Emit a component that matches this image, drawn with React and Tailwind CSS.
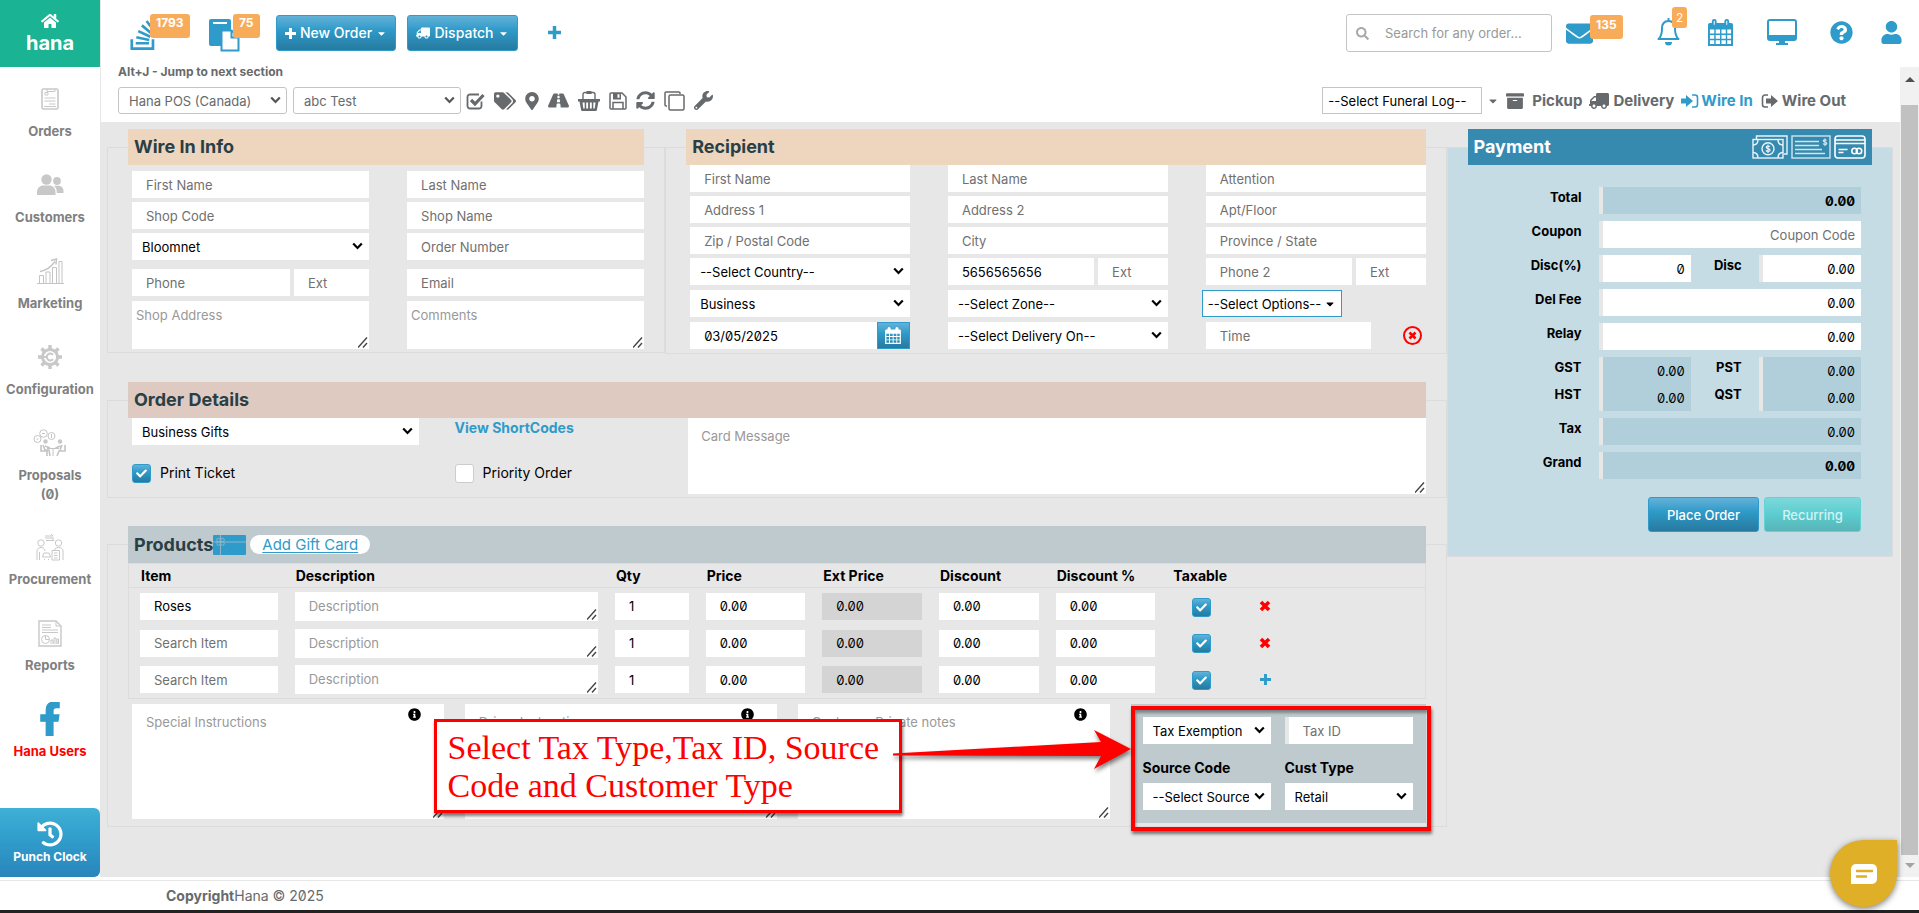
import React from 'react';
import {
  FaHome, FaTruck, FaCaretDown, FaSearch, FaEnvelope, FaUser, FaTags, FaMapMarkerAlt,
  FaRoad, FaSyncAlt, FaWrench, FaArchive, FaHistory, FaFacebookF, FaInfoCircle, FaCheck,
  FaStackOverflow, FaQuestionCircle,
} from 'react-icons/fa';

const BLUE_BTN =
  'bg-linear-to-b from-[#62b2d8] via-[#2f9bca] via-40% to-[#277a9f] border border-[#2f9bca] text-white';

/* ---------- icons ---------- */

function PlusIcon({ className }) {
  return (
    <svg viewBox="0 0 12 12" className={className}>
      <path d="M6 0v12M0 6h12" stroke="currentColor" strokeWidth="3.200" />
    </svg>
  );
}

function CrossIcon({ className }) {
  return (
    <svg viewBox="0 0 12 12" className={className}>
      <path d="M2 2l8 8M10 2l-8 8" stroke="currentColor" strokeWidth="3.600" />
    </svg>
  );
}

function ClipboardIcon() {
  return (
    <svg width="32" height="34" viewBox="0 0 32 34" fill="none">
      <path d="M1 3a2 2 0 0 1 2-2h18a2 2 0 0 1 2 2v9h-6a3 3 0 0 0-3 3v13H3a2 2 0 0 1-2-2z" fill="#2f9bca" />
      <rect x="5" y="4" width="14" height="2" fill="#fff" />
      <path d="M13.500 12.500h10l7 7v13h-17z" fill="#fff" stroke="#2f9bca" strokeWidth="2" />
      <path d="M23.500 12.500v7h7" stroke="#2f9bca" strokeWidth="2" />
    </svg>
  );
}

function CalendarIcon({ width, height }) {
  return (
    <svg width={width} height={height} viewBox="0 0 26 28" fill="none">
      <path fillRule="evenodd" fill="currentColor" d="M0 6a2 2 0 0 1 2-2h22a2 2 0 0 1 2 2v22H0zM2 11v4h4.500v-4zM8 11v4h4.500v-4zM14 11v4h4.500v-4zM20 11v4h4v-4zM2 16.500v4h4.500v-4zM8 16.500v4h4.500v-4zM14 16.500v4h4.500v-4zM20 16.500v4h4v-4zM2 22v4h4.500v-4zM8 22v4h4.500v-4zM14 22v4h4.500v-4zM20 22v4h4v-4z" />
      <rect x="4" y="0" width="5" height="8" rx="2.500" fill="currentColor" />
      <rect x="17" y="0" width="5" height="8" rx="2.500" fill="currentColor" />
      <path d="M6.500 2v4M19.500 2v4" stroke="#fff" strokeWidth="1" />
    </svg>
  );
}

function BellIcon() {
  return (
    <svg width="23" height="28" viewBox="0 0 23 28" fill="none" stroke="#2f9bca" strokeWidth="2">
      <path d="M11.500 3C6.800 3 5 6.500 5 10.500c0 6-1.200 8.500-3.500 10.500h20C19.200 19 18 16.500 18 10.500 18 6.500 16.200 3 11.500 3z" strokeLinejoin="round" />
      <path d="M11.500 0v3" />
      <path d="M8 24h7a3.500 3.500 0 0 1-7 0z" fill="#2f9bca" stroke="none" />
    </svg>
  );
}

function MonitorIcon() {
  return (
    <svg width="30" height="26" viewBox="0 0 30 26" fill="none">
      <rect x="1" y="1" width="28" height="20" rx="2" stroke="#2f9bca" strokeWidth="2" />
      <path d="M1 16h28v3a2 2 0 0 1-2 2H3a2 2 0 0 1-2-2zM12 21h6v3h3v2H9v-2h3z" fill="#2f9bca" />
    </svg>
  );
}

function CheckSquareIcon() {
  return (
    <svg width="19" height="18" viewBox="0 0 19 18" fill="none" stroke="currentColor">
      <path d="M15.500 9.500V14a2.500 2.500 0 0 1-2.500 2.500H4A2.500 2.500 0 0 1 1.500 14V5A2.500 2.500 0 0 1 4 2.500h9" strokeWidth="1.800" />
      <path d="M5 8l4 4L17.500 3" strokeWidth="3.200" />
    </svg>
  );
}

function BasketIcon() {
  return (
    <svg width="22" height="20" viewBox="0 0 22 20" fill="none">
      <path d="M5 9V3.500A2 2 0 0 1 7 1.500h8a2 2 0 0 1 2 2V9" stroke="currentColor" strokeWidth="1.400" />
      <rect x="8" y="0" width="6" height="3" rx="1.500" fill="currentColor" />
      <path fillRule="evenodd" fill="currentColor" d="M0 8h22v2.500h-1.500L19 18.500a1.500 1.500 0 0 1-1.500 1.500h-13A1.500 1.500 0 0 1 3 18.500L1.500 10.500H0zM4.500 11.500l.8 6h1.400v-6zM8.200 11.500v6h1.900v-6zM11.900 11.500v6h1.900v-6zM15.300 11.500v6h1.400l.8-6z" />
    </svg>
  );
}

function SaveIcon() {
  return (
    <svg width="18" height="18" viewBox="0 0 18 18" fill="none" stroke="currentColor" strokeWidth="1.500">
      <path d="M1 2a1 1 0 0 1 1-1h11l4 4v11a1 1 0 0 1-1 1H2a1 1 0 0 1-1-1z" />
      <path d="M4 17v-6.500h10V17" />
      <path fillRule="evenodd" d="M4 1h8v6.500H4zM8.500 2.200v3.600h2V2.200z" fill="currentColor" stroke="none" />
    </svg>
  );
}

function CopyIcon() {
  return (
    <svg width="21" height="20" viewBox="0 0 21 20" fill="none" stroke="currentColor" strokeWidth="1.500">
      <path d="M3 15H2a1 1 0 0 1-1-1V2a1 1 0 0 1 1-1h13a1 1 0 0 1 1 1v1" />
      <rect x="5" y="4" width="15" height="15" rx="1.500" />
    </svg>
  );
}

function SignIcon({ out }) {
  return (
    <svg width="18" height="16" viewBox="0 0 18 16" fill="none">
      <path
        d={out ? 'M7 2H4a2.500 2.500 0 0 0-2.500 2.500v7A2.500 2.500 0 0 0 4 14h3' : 'M11 2h3a2.500 2.500 0 0 1 2.500 2.500v7A2.500 2.500 0 0 1 14 14h-3'}
        stroke="currentColor"
        strokeWidth="1.600"
      />
      <path d={out ? 'M5 5.500h5V2l7 6-7 6v-3.500H5z' : 'M0 5.500h5V2l7 6-7 6v-3.500H0z'} fill="currentColor" />
    </svg>
  );
}

function GiftCardIcon() {
  return (
    <svg width="33" height="20" viewBox="0 0 33 20" fill="none" stroke="#8fb4c6">
      <rect x="0" y="0" width="33" height="20" rx="1" fill="#2f9bca" stroke="none" />
      <path d="M0 7h33M7.500 0v20" />
      <circle cx="5.500" cy="5" r="1.800" />
      <circle cx="9.500" cy="5" r="1.800" />
      <circle cx="5.500" cy="8.500" r="1.800" />
      <circle cx="9.500" cy="8.500" r="1.800" />
    </svg>
  );
}

function CashIcon() {
  return (
    <svg width="36" height="24" viewBox="0 0 36 24" fill="none" stroke="#e8f4f9" strokeWidth="1.400">
      <path d="M4.500 4V1H35v18h-3" />
      <rect x="1" y="4.500" width="30" height="18.500" />
      <circle cx="16" cy="13.700" r="6" />
      <path d="M1 10c3 0 5-2 5-5.500M31 10c-3 0-5-2-5-5.500M1 17.500c3 0 5 2 5 5.500M31 17.500c-3 0-5 2-5 5.500" />
      <path d="M18 11.800c-.5-1-3.800-1.200-3.800.4 0 1.900 3.900 1 3.900 3 0 1.700-3.500 1.500-4.200.2M16 9.500v8.500" strokeWidth="1.200" />
    </svg>
  );
}

function ChequeIcon() {
  return (
    <svg width="40" height="24" viewBox="0 0 40 24" fill="none" stroke="#cfe6f0" strokeWidth="1.400">
      <rect x="1" y="1" width="38" height="22" />
      <path d="M4 6.500h24M4 10.500h24M4 14.500h27M4 18.500h30" />
      <path d="M35.500 5.500c-.5-1-3.300-1-3.300.3 0 1.600 3.500.8 3.500 2.600 0 1.500-3 1.400-3.600.2M34 3.500v7.500" strokeWidth="1.200" />
    </svg>
  );
}

function CreditCardIcon() {
  return (
    <svg width="32" height="24" viewBox="0 0 32 24" fill="none" stroke="#fff" strokeWidth="1.600">
      <rect x="1" y="1" width="30" height="22" rx="3" />
      <path d="M1 5h30M1 8.500h30" />
      <path d="M4.500 14.500h9M4.500 17.500h5" />
      <circle cx="20.500" cy="16" r="2.700" />
      <circle cx="25" cy="16" r="2.700" />
    </svg>
  );
}

function OrdersIcon() {
  return (
    <svg width="18" height="22" viewBox="0 0 18 22" fill="none" stroke="#c8c8c8">
      <rect x="1" y="1" width="16" height="20" rx="1.500" strokeWidth="1.600" />
      <path d="M6 1v2.500h8V1M4 4.500h3v2.500H4zM3.500 10h11M3.500 13h11M8 16h6.500M3 18.500h12" />
    </svg>
  );
}

function CustomersIcon() {
  return (
    <svg width="27" height="22" viewBox="0 0 27 22" fill="#c8c8c8">
      <circle cx="9.500" cy="5.500" r="5.200" />
      <path d="M0 21v-3c0-4 3-6.500 6.500-6.500h5.500c3.500 0 6.500 2.500 6.500 6.500v3z" />
      <circle cx="20" cy="7" r="3.900" />
      <path d="M19.800 19v-1c0-2.700-1.200-5-3-6.300h4.700c3 0 5 2.200 5 5.300v2z" />
    </svg>
  );
}

function MarketingIcon() {
  return (
    <svg width="27" height="26" viewBox="0 0 27 26" fill="none" stroke="#c4c4c4">
      <path d="M0 25.500h27" />
      <path d="M2.500 25v-7.500h4V25M9 25V14h4v11M15.500 25V9.500h4V25M22 25V3.500h3V25" />
      <path d="M3 13.500c6-1 11-4.500 15-10M14 2.500l5.500-1.500-.5 5.500" strokeWidth="1.400" />
    </svg>
  );
}

function ConfigIcon() {
  return (
    <svg width="26" height="26" viewBox="0 0 26 26" fill="none" stroke="#c8c8c8">
      <circle cx="13" cy="13" r="7.600" strokeWidth="3" />
      <path d="M13 1v4M13 21v4M1 13h4M21 13h4M4.500 4.500l2.800 2.800M18.700 18.700l2.800 2.800M4.500 21.500l2.800-2.800M18.700 7.300l2.800-2.800" strokeWidth="3.400" />
      <path d="M1 13h9M16 10.800a3.500 3.500 0 1 0 0 4.400" strokeWidth="2" />
    </svg>
  );
}

function ProposalsIcon() {
  return (
    <svg width="34" height="28" viewBox="0 0 34 28" fill="none" stroke="#c4c4c4">
      <circle cx="4.500" cy="10" r="3.500" />
      <circle cx="10.500" cy="4.500" r="3.800" />
      <circle cx="18.500" cy="7" r="3.500" />
      <path d="M3.500 10h2M9 4.500h3M18.500 5v4" />
      <circle cx="12.500" cy="12.500" r="2.200" fill="#c8c8c8" stroke="none" />
      <circle cx="27" cy="12.500" r="2.200" fill="#c8c8c8" stroke="none" />
      <path d="M12 17l5 2M8 16v6h6v5M10 16l2 5h4l1 6M27.500 17l-5 2M32 16v6h-6l-2 5M29 16l-2 5" strokeWidth="1.600" />
      <path d="M14 19.500h12M20 19.500V27" />
    </svg>
  );
}

function ProcurementIcon() {
  return (
    <svg width="28" height="28" viewBox="0 0 28 28" fill="none" stroke="#c8c8c8">
      <path d="M9 3h8l-2-2M9 5h9M10 7.500h8l-2-2" />
      <circle cx="5" cy="10" r="3.200" />
      <circle cx="22.500" cy="10" r="3.200" />
      <path d="M1 27V18c0-2 1.500-3.500 4-3.500s4 1.500 4 3.500M3.500 19v8M27 27v-9c0-2-1.500-3.500-4.500-3.500-2 0-3.500 1-4 2.500" />
      <path d="M6.500 24h8l-1.500-4H8zM8 26.500h1M12 26.500h1M16 17.500h7.500V27H16zM18 20h3.500M18 22.500h3.500M18 25h3.500" />
    </svg>
  );
}

function ReportsIcon() {
  return (
    <svg width="24" height="27" viewBox="0 0 24 27" fill="none" stroke="#c8c8c8">
      <path d="M1 1h17l5 5v20H1z" strokeWidth="1.400" />
      <path d="M18 1v5h5M4 5h9M4 7.500h9M4 10h16M4 12.500h16" />
      <circle cx="7.500" cy="19.500" r="4" />
      <path d="M7.500 15.500v4h4M13 24v-4h2v4M16 24v-6h2v6M19 24v-5h1.500v5" />
    </svg>
  );
}

/* heavy, square-cut f */
function FacebookIcon() {
  return <FaFacebookF className="size-[34px] stroke-current stroke-[20px] text-[#2f9bca]" />;
}

/* ---------- form parts ---------- */

function TextField({ label, value, className = '' }) {
  return (
    <input
      type="text"
      aria-label={label}
      placeholder={label}
      defaultValue={value}
      className={`h-[27px] w-full min-w-0 bg-white px-[14px] text-black placeholder:text-[#707070] ${className}`}
    />
  );
}

function SelectField({ id, label, value, className = 'text-black' }) {
  return (
    <div className="relative min-w-0">
      <select
        id={id}
        aria-label={label}
        className={`h-[27px] w-full appearance-none bg-white pr-[22px] pl-[10px] ${className}`}
      >
        <option>{value}</option>
      </select>
      <svg width="11" height="8" viewBox="0 0 11 8" fill="none" className={`pointer-events-none absolute top-[9px] right-[6px] ${className === 'text-black' ? '' : 'text-[#555]'}`}>
        <path d="M1.200 1.500L5.500 6l4.300-4.500" stroke="currentColor" strokeWidth="2.200" />
      </svg>
    </div>
  );
}

function TextArea({ label, className = '' }) {
  return (
    <div className="relative w-full min-w-0">
      <textarea
        aria-label={label}
        placeholder={label}
        className={`block w-full resize-none bg-white text-black placeholder:text-[#999] ${className}`}
      />
      <svg width="10" height="11" viewBox="0 0 10 11" className="pointer-events-none absolute right-px bottom-px">
        <path d="M0 10.500L9 .5M5 10.500l4-4.500" stroke="#444" strokeWidth="1.400" />
      </svg>
    </div>
  );
}

function Checkbox({ checked, id, label }) {
  return (
    <span className="relative inline-flex align-middle">
      <input
        type="checkbox"
        id={id}
        aria-label={label}
        defaultChecked={checked}
        className="size-[19px] appearance-none rounded-[3px] border border-[#ccc] bg-white checked:border-[#2f9bca] checked:bg-linear-to-b checked:from-[#62b2d8] checked:via-[#2f9bca] checked:via-40% checked:to-[#277a9f]"
      />
      {checked && <FaCheck className="pointer-events-none absolute top-1 left-1 size-[11px] text-white" />}
    </span>
  );
}

function Panel({ title, color, extra, titleColor = 'text-[#2a3f45]', bar = 'h-9', className = '', children }) {
  return (
    <fieldset className={`min-w-0 border border-[#dcdcdc] px-5 ${className}`}>
      <legend className={`w-full ${color}`}>
        <span className={`flex items-center px-[6px] ${bar}`}>
          <span className={`text-[18px] leading-6 font-bold ${titleColor}`}>{title}</span>
          {extra}
        </span>
      </legend>
      {children}
    </fieldset>
  );
}

/* ---------- layout ---------- */

const MENU = [
  { label: 'Orders', icon: <OrdersIcon /> },
  { label: 'Customers', icon: <CustomersIcon /> },
  { label: 'Marketing', icon: <MarketingIcon /> },
  { label: 'Configuration', icon: <ConfigIcon /> },
  { label: 'Proposals', count: '(0)', icon: <ProposalsIcon /> },
  { label: 'Procurement', icon: <ProcurementIcon /> },
  { label: 'Reports', icon: <ReportsIcon /> },
  { label: 'Hana Users', red: true, icon: <FacebookIcon /> },
];

function Sidebar() {
  return (
    <aside className="flex w-[101px] shrink-0 flex-col border-r border-[#e7e7e7] bg-white">
      <a href="#home" className="flex h-[67px] flex-col items-center bg-[#1ab394] pt-3 text-white">
        <FaHome className="size-[18px]" />
        <span className="text-[20px] leading-[26px] font-bold">hana</span>
      </a>
      <nav>
        {MENU.map((item) => (
          <a
            key={item.label}
            href="#menu"
            className={`flex flex-col items-center pt-[18px] pb-3 text-[13px] leading-5 font-bold ${item.red ? 'text-[#f00]' : 'text-[#808080]'}`}
          >
            <span className="mb-2 flex h-7 items-center">{item.icon}</span>
            {item.label}
            {item.count && <span className="leading-[18px] slashed-zero">{item.count}</span>}
          </a>
        ))}
      </nav>
      <button
        type="button"
        className="mt-auto flex h-[69px] w-full flex-col items-center justify-center gap-[2px] rounded-r-md bg-linear-to-b from-[#3fb0d6] via-[#2f9bca] to-[#2a85bb] text-xs font-bold text-white"
      >
        <FaHistory className="size-[26px]" />
        Punch Clock
      </button>
    </aside>
  );
}

function Badge({ children, className }) {
  return (
    <span className={`absolute rounded-[3px] bg-[#f8ac59] px-[6px] text-xs font-bold text-white ${className}`}>
      {children}
    </span>
  );
}

function Header() {
  return (
    <header className="flex h-[67px] items-start justify-between bg-white pt-[14px] pr-[17px] pl-7">
      <div className="flex items-start">
        <a href="#queue" aria-label="Order queue" className="relative mr-[51px] pt-[4px]">
          <FaStackOverflow className="h-[34px] w-[28px] text-[#2f9bca]" />
          <Badge className="top-0 left-[21px] h-6 leading-[18px]">1793</Badge>
        </a>
        <a href="#drafts" aria-label="Saved orders" className="relative mr-9 pt-[4px]">
          <ClipboardIcon />
          <Badge className="top-0 left-[25px] h-6 leading-[18px]">75</Badge>
        </a>
        <button type="button" className={`mt-px mr-[11px] flex h-9 w-[120px] items-center justify-center gap-1 rounded-[3px] text-sm font-medium ${BLUE_BTN}`}>
          <PlusIcon className="size-[11px]" />
          New Order
          <FaCaretDown className="size-[11px]" />
        </button>
        <button type="button" className={`mt-px mr-[30px] flex h-9 w-[111px] items-center justify-center gap-1 rounded-[3px] text-sm font-medium ${BLUE_BTN}`}>
          <FaTruck className="size-[14px] -scale-x-100" />
          Dispatch
          <FaCaretDown className="size-[11px]" />
        </button>
        <button type="button" aria-label="Add" className="mt-3 text-[#2f9bca]">
          <PlusIcon className="size-[13px]" />
        </button>
      </div>

      <div className="flex items-start text-[#2f9bca]">
        <label className="mr-[14px] flex h-[38px] w-[206px] items-center gap-4 rounded-[3px] border border-[#c4c4c4] px-[9px]">
          <FaSearch className="size-[13px] shrink-0 text-[#aaa]" />
          <input type="search" aria-label="Search for any order" placeholder="Search for any order..." className="min-w-0 flex-1 text-[13px] placeholder:text-[#999]" />
        </label>
        <a href="#mail" aria-label="Messages" className="relative mr-16 pt-[6px]">
          <FaEnvelope className="size-[27px]" />
          <Badge className="top-px left-6 h-6 leading-5">135</Badge>
        </a>
        <div className="flex items-center gap-7 pt-1">
          <a href="#alerts" aria-label="Alerts" className="relative">
            <BellIcon />
            <span className="absolute -top-[11px] left-[15px] rounded-[3px] bg-[#f8ac59] px-1 text-[12px] leading-[21px] text-white">2</span>
          </a>
          <a href="#calendar" aria-label="Calendar"><CalendarIcon width="25" height="27" /></a>
          <a href="#screens" aria-label="Screens" className="flex w-[41px] justify-center"><MonitorIcon /></a>
          <a href="#help" aria-label="Help"><FaQuestionCircle className="size-[23px]" /></a>
          <a href="#profile" aria-label="Profile"><FaUser className="h-[23px] w-[21px]" /></a>
        </div>
      </div>
    </header>
  );
}

function Toolbar() {
  return (
    <div className="bg-white pb-2 pl-[17px] text-[#676a6c]">
      <p className="h-5 text-[12px] leading-[10px] font-bold">Alt+J - Jump to next section</p>
      <div className="flex items-center justify-between pr-[54px]">
        <div className="flex items-center">
          <div className="mr-[6px] w-[169px]">
            <SelectField label="Shop" value="Hana POS (Canada)" className="rounded-[3px] border border-[#c4c4c4] text-[#676a6c]" />
          </div>
          <div className="mr-[5px] w-[168px]">
            <SelectField label="Customer" value="abc Test" className="rounded-[3px] border border-[#c4c4c4] text-[#676a6c]" />
          </div>
          <div className="flex items-center gap-[9px]">
            <CheckSquareIcon />
            <FaTags className="size-[22px]" />
            <FaMapMarkerAlt className="h-[18px] w-[14px]" />
            <FaRoad className="size-[21px]" />
            <BasketIcon />
            <SaveIcon />
            <FaSyncAlt className="size-[19px]" />
            <CopyIcon />
            <FaWrench className="size-[19px]" />
          </div>
        </div>

        <div className="flex items-center text-[15px] font-bold">
          <button type="button" className="h-[27px] w-[160px] border border-[#c4c4c4] bg-white px-[5px] text-left text-[13px] font-normal text-black">
            --Select Funeral Log--
          </button>
          <FaCaretDown className="mx-[5px] size-3" />
          <FaArchive className="mr-2 ml-[2px] size-[18px]" />
          <a href="#pickup" className="mr-[7px]">Pickup</a>
          <FaTruck className="mr-1 size-5 -scale-x-100" />
          <a href="#delivery" className="mr-[7px]">Delivery</a>
          <a href="#wirein" className="mr-2 flex items-center gap-[2px] text-[#2f9bca]"><SignIcon />Wire In</a>
          <a href="#wireout" className="flex items-center gap-[3px]"><SignIcon out />Wire Out</a>
        </div>
      </div>
    </div>
  );
}

function WireInInfo() {
  return (
    <Panel title="Wire In Info" color="bg-[#eed5be]" className="col-span-5 pb-[3px]">
      <div className="grid grid-cols-2 gap-x-[38px] gap-y-1 pt-[6px] pl-1">
        <TextField label="First Name" />
        <TextField label="Last Name" />
        <TextField label="Shop Code" />
        <TextField label="Shop Name" />
        <SelectField label="Wire service" value="Bloomnet" />
        <TextField label="Order Number" />
      </div>
      <div className="mt-[9px] grid grid-cols-2 gap-x-[38px] gap-y-[5px] pl-1">
        <div className="grid grid-cols-[21fr_10fr] gap-1">
          <TextField label="Phone" />
          <TextField label="Ext" />
        </div>
        <TextField label="Email" />
        <TextArea label="Shop Address" className="h-12 px-1 py-1" />
        <TextArea label="Comments" className="h-12 px-1 py-1" />
      </div>
    </Panel>
  );
}

function Recipient() {
  return (
    <Panel title="Recipient" color="bg-[#eed5be]" className="col-span-7 pb-1">
      <div className="grid grid-cols-3 gap-x-[38px] gap-y-1 pl-1">
        <TextField label="First Name" />
        <TextField label="Last Name" />
        <TextField label="Attention" />
        <TextField label="Address 1" />
        <TextField label="Address 2" />
        <TextField label="Apt/Floor" />
        <TextField label="Zip / Postal Code" />
        <TextField label="City" />
        <TextField label="Province / State" />
      </div>
      <div className="mt-1 grid grid-cols-3 gap-x-[38px] gap-y-[5px] pl-1">
        <SelectField label="Country" value="--Select Country--" />
        <div className="grid grid-cols-[21fr_10fr] gap-1">
          <TextField label="Phone" value="5656565656" />
          <TextField label="Ext" />
        </div>
        <div className="grid grid-cols-[21fr_10fr] gap-1">
          <TextField label="Phone 2" />
          <TextField label="Ext" />
        </div>
        <SelectField label="Location type" value="Business" />
        <SelectField label="Zone" value="--Select Zone--" />
        <button type="button" className="-ml-1 flex h-[27px] w-[140px] items-center justify-between border border-[#2f9bca] bg-white px-[5px] text-black">
          --Select Options--
          <FaCaretDown className="size-3" />
        </button>
        <div className="flex">
          <TextField label="Delivery date" value="03/05/2025" className="flex-1 slashed-zero" />
          <button type="button" aria-label="Pick a date" className={`flex h-[27px] w-[33px] shrink-0 items-center justify-center ${BLUE_BTN}`}>
            <CalendarIcon width="16" height="17" />
          </button>
        </div>
        <SelectField label="Deliver on" value="--Select Delivery On--" />
        <div className="flex items-center justify-between">
          <div className="w-3/4">
            <TextField label="Time" />
          </div>
          <button type="button" aria-label="Remove recipient" className="mr-1 flex size-[19px] items-center justify-center rounded-full border-2 border-[#f00] text-[#f00]">
            <CrossIcon className="size-[9px]" />
          </button>
        </div>
      </div>
    </Panel>
  );
}

function OrderDetails() {
  return (
    <Panel title="Order Details" color="bg-[#dfcac2]" className="col-span-12 mt-7 pb-[3px]">
      <div className="flex pl-1">
        <div className="grid w-[43%] shrink-0 grid-cols-[58%_42%] content-start gap-y-[18px] text-[14px] text-black">
          <div className="pr-9 text-[13px]">
            <SelectField label="Occasion" value="Business Gifts" />
          </div>
          <a href="#shortcodes" className="leading-5 font-bold text-[#2f9bca]">View ShortCodes</a>
          <label htmlFor="print-ticket" className="flex items-center gap-[9px]">
            <Checkbox id="print-ticket" checked />
            Print Ticket
          </label>
          <label htmlFor="priority-order" className="flex items-center gap-[9px]">
            <Checkbox id="priority-order" />
            Priority Order
          </label>
        </div>
        <TextArea label="Card Message" className="h-[76px] px-[13px] py-2" />
      </div>
    </Panel>
  );
}

const ITEMS = [
  { item: 'Roses', last: false },
  { item: '', last: false },
  { item: '', last: true },
];

function ProductTable() {
  return (
    <table className="w-full table-fixed border border-[#dcdcdc] text-left text-black">
      <colgroup>
        <col className="w-[12.2%]" />
        <col className="w-[24.7%]" />
        <col className="w-[7%]" />
        <col className="w-[9%]" />
        <col className="w-[9%]" />
        <col className="w-[9%]" />
        <col className="w-[9%]" />
        <col className="w-[5.7%]" />
        <col className="w-[4.2%]" />
        <col />
      </colgroup>
      <thead className="text-[14px]">
        <tr className="h-6 border-b border-[#dcdcdc]">
          <th className="pl-3">Item</th>
          <th className="pl-[9px]">Description</th>
          <th className="pl-[9px]">Qty</th>
          <th className="pl-[9px]">Price</th>
          <th className="pl-[9px]">Ext Price</th>
          <th className="pl-[9px]">Discount</th>
          <th className="pl-[9px]">Discount %</th>
          <th className="pl-[9px]">Taxable</th>
          <th />
          <th />
        </tr>
      </thead>
      <tbody>
        {ITEMS.map((row, i) => (
          <tr key={i} className="h-[37px]">
            <td className="pr-[9px] pl-[11px]"><TextField label="Search Item" value={row.item} /></td>
            <td className="pr-[9px] pl-2"><TextArea label="Description" className="h-[29px] px-[14px] py-1" /></td>
            <td className="pr-[9px] pl-2"><TextField label="Qty" value="1" /></td>
            <td className="pr-[9px] pl-2"><TextField label="Price" value="0.00" className="slashed-zero" /></td>
            <td className="pr-[9px] pl-2">
              <input type="text" aria-label="Ext Price" readOnly value="0.00" className="h-[27px] w-full bg-[#d4d4d4] px-[14px] slashed-zero" />
            </td>
            <td className="pr-[9px] pl-2"><TextField label="Discount" value="0.00" className="slashed-zero" /></td>
            <td className="pr-[9px] pl-2"><TextField label="Discount %" value="0.00" className="slashed-zero" /></td>
            <td className="text-center align-middle"><Checkbox label="Taxable" checked /></td>
            <td>
              {row.last ? (
                <button type="button" aria-label="Add item" className="mx-auto block text-[#2f9bca]"><PlusIcon className="size-[11px]" /></button>
              ) : (
                <button type="button" aria-label="Remove item" className="mx-auto block text-[#f00]"><CrossIcon className="size-3" /></button>
              )}
            </td>
            <td />
          </tr>
        ))}
      </tbody>
    </table>
  );
}

function Note({ label }) {
  return (
    <div className="relative">
      <TextArea label={label} className="h-[115px] px-[14px] py-2" />
      <FaInfoCircle className="absolute top-1 right-[23px] size-[13px] text-black" />
    </div>
  );
}

/* red tutorial callout with its arrow, hung on the left of the tax box */
function Callout() {
  return (
    <>
      <div className="pointer-events-none absolute top-[2px] -right-[5px] -bottom-2 left-0 border-4 border-[#f00] shadow-[1px_3px_3px_rgba(0,0,0,0.5),inset_1px_3px_3px_rgba(0,0,0,0.35)]" />
      <div className="pointer-events-none absolute top-[15px] right-full flex">
        <p className="h-[94px] w-[468px] border-[3px] border-[#f00] bg-white pt-[7px] pl-[11px] font-['Liberation_Serif',serif] text-[34px] leading-[38px] whitespace-nowrap text-[#f00] shadow-[1px_3px_3px_rgba(0,0,0,0.5)]">
          Select Tax Type,Tax ID, Source
          <br />
          Code and Customer Type
        </p>
        <svg width="238" height="60" viewBox="0 0 238 60" className="-ml-[9px] drop-shadow-[1px_3px_2px_rgba(0,0,0,0.5)]">
          <path d="M0 34.500L208 23l-7-12 37 19-37 20 7-13L0 36.500z" fill="#f00" />
        </svg>
      </div>
    </>
  );
}

function TaxBox() {
  return (
    <div className="relative grid h-[119px] grid-cols-2 content-start gap-x-[14px] bg-[#bfcace] pt-[13px] pr-[13px] pl-3 text-black">
      <SelectField label="Tax type" value="Tax Exemption" />
      <TextField label="Tax ID" className="border-l-4 border-[#e7e7e7]" />
      <label htmlFor="source-code" className="pt-[14px] pb-[5px] text-[14px] leading-5 font-bold">Source Code</label>
      <label htmlFor="cust-type" className="pt-[14px] pb-[5px] text-[14px] leading-5 font-bold">Cust Type</label>
      <SelectField id="source-code" value="--Select Source Code--" />
      <SelectField id="cust-type" value="Retail" />
      <Callout />
    </div>
  );
}

function Products() {
  return (
    <Panel
      title="Products"
      color="bg-[#bfcace]"
      bar="h-[37px]"
      className="col-span-12 mt-7 pb-[3px]"
      extra={
        <>
          <GiftCardIcon />
          <a href="#giftcard" className="ml-1 rounded-full bg-white px-3 text-[15px] leading-[19px] text-[#2f9bca] underline underline-offset-2">
            Add Gift Card
          </a>
        </>
      }
    >
      <ProductTable />
      <div className="mt-[5px] grid grid-cols-[1fr_1fr_1fr_295px] gap-[21px] pl-1">
        <Note label="Special Instructions" />
        <Note label="Driver Instructions" />
        <Note label="Customer Private notes" />
        <TaxBox />
      </div>
    </Panel>
  );
}

function PayField({ id, label, value, placeholder, locked, bold, className = '' }) {
  return (
    <>
      <label htmlFor={id} className="pr-[17px] text-right leading-[21px] font-bold text-black">{label}</label>
      <input
        id={id}
        type="text"
        defaultValue={value}
        placeholder={placeholder}
        className={`h-[27px] w-full min-w-0 border-l-4 border-[#e7e7e7] pr-[6px] text-right text-black slashed-zero placeholder:text-[#707070] ${locked ? 'bg-[#b0cfda]' : 'bg-white'} ${bold ? 'font-bold' : ''} ${className}`}
      />
    </>
  );
}

function Payment() {
  return (
    <Panel
      title="Payment"
      color="bg-[#378aaf]"
      titleColor="text-white"
      className="bg-[#c6dce4] pb-6"
      extra={
        <span className="ml-auto flex items-center gap-[3px]">
          <CashIcon />
          <ChequeIcon />
          <CreditCardIcon />
        </span>
      }
    >
      <div className="grid grid-cols-[131px_92fr_68px_102fr] gap-y-[7px] pt-[22px] pr-[11px]">
        <PayField id="total" label="Total" value="0.00" locked bold className="col-span-3" />
        <PayField id="coupon" label="Coupon" placeholder="Coupon Code" className="col-span-3" />
        <PayField id="disc-pct" label="Disc(%)" value="0" />
        <PayField id="disc" label="Disc" value="0.00" />
        <PayField id="del-fee" label="Del Fee" value="0.00" className="col-span-3" />
        <PayField id="relay" label="Relay" value="0.00" className="col-span-3" />
        <div className="col-span-4 grid grid-cols-[131px_92fr_68px_102fr]">
          <PayField id="gst" label="GST" value="0.00" locked />
          <PayField id="pst" label="PST" value="0.00" locked />
          <PayField id="hst" label="HST" value="0.00" locked />
          <PayField id="qst" label="QST" value="0.00" locked />
        </div>
        <PayField id="tax" label="Tax" value="0.00" locked className="col-span-3" />
        <PayField id="grand" label="Grand" value="0.00" locked bold className="col-span-3" />
      </div>
      <div className="mt-[18px] flex justify-end gap-[5px] pr-[11px] text-[13px] font-medium">
        <button type="button" className={`h-[35px] w-[111px] rounded-[3px] ${BLUE_BTN}`}>Place Order</button>
        <button type="button" className="h-[35px] w-[97px] rounded-[3px] border border-[#63d3d6] bg-linear-to-b from-[#7cd8da] via-[#5bcdd0] to-[#58b4b6] text-[#d5f3f3]">Recurring</button>
      </div>
    </Panel>
  );
}

function ScrollTrack() {
  return (
    <div aria-hidden="true" className="flex w-[19px] shrink-0 flex-col items-center bg-[#f1f1f1]">
      <span className="mt-[10px] mb-[23px] border-x-[5px] border-b-[5px] border-x-transparent border-b-[#505050]" />
      <span className="w-[17px] flex-1 bg-[#c1c1c1]" />
      <span className="mt-2 mb-[9px] border-x-[5px] border-t-[5px] border-x-transparent border-t-[#a3a3a3]" />
    </div>
  );
}

export default function App() {
  return (
    <div className="flex min-h-screen flex-col bg-white font-[Inter,sans-serif] text-[13px] leading-5">
      <div className="flex flex-1">
        <Sidebar />
        <div className="flex min-w-0 flex-1 flex-col">
          <Header />
          <div className="flex flex-1">
            <div className="flex min-w-0 flex-1 flex-col">
              <Toolbar />
              <main className="grid flex-1 grid-cols-[3fr_1fr] items-start bg-[#e7e7e7] pt-[7px] pr-[7px] pl-[6px]">
                <form className="grid min-w-0 grid-cols-12 items-start">
                  <WireInInfo />
                  <Recipient />
                  <OrderDetails />
                  <Products />
                </form>
                <Payment />
              </main>
            </div>
            <ScrollTrack />
          </div>
        </div>
      </div>

      <footer className="mt-[3px] h-[33px] border-t border-b-[3px] border-t-[#e7e7e7] border-b-[#222] pl-[166px] text-[14px] leading-[30px] text-[#676a6c]">
        <strong>Copyright</strong>Hana © <span className="slashed-zero">2025</span>
      </footer>

      <button
        type="button"
        aria-label="Open chat"
        className="fixed right-[22px] bottom-[6px] flex size-[67px] items-center justify-center rounded-full rounded-tr-[12px] bg-[#dfaf27] shadow-[0_2px_6px_rgba(0,0,0,0.5)]"
      >
        <svg width="26" height="20" viewBox="0 0 26 20">
          <path d="M5 0h16a5 5 0 0 1 5 5v10a5 5 0 0 1-5 5H0V5a5 5 0 0 1 5-5z" fill="#fff" />
          <path d="M6 7h15M6 12.500h9" stroke="#dfaf27" strokeWidth="2.600" strokeLinecap="round" />
        </svg>
      </button>
    </div>
  );
}
